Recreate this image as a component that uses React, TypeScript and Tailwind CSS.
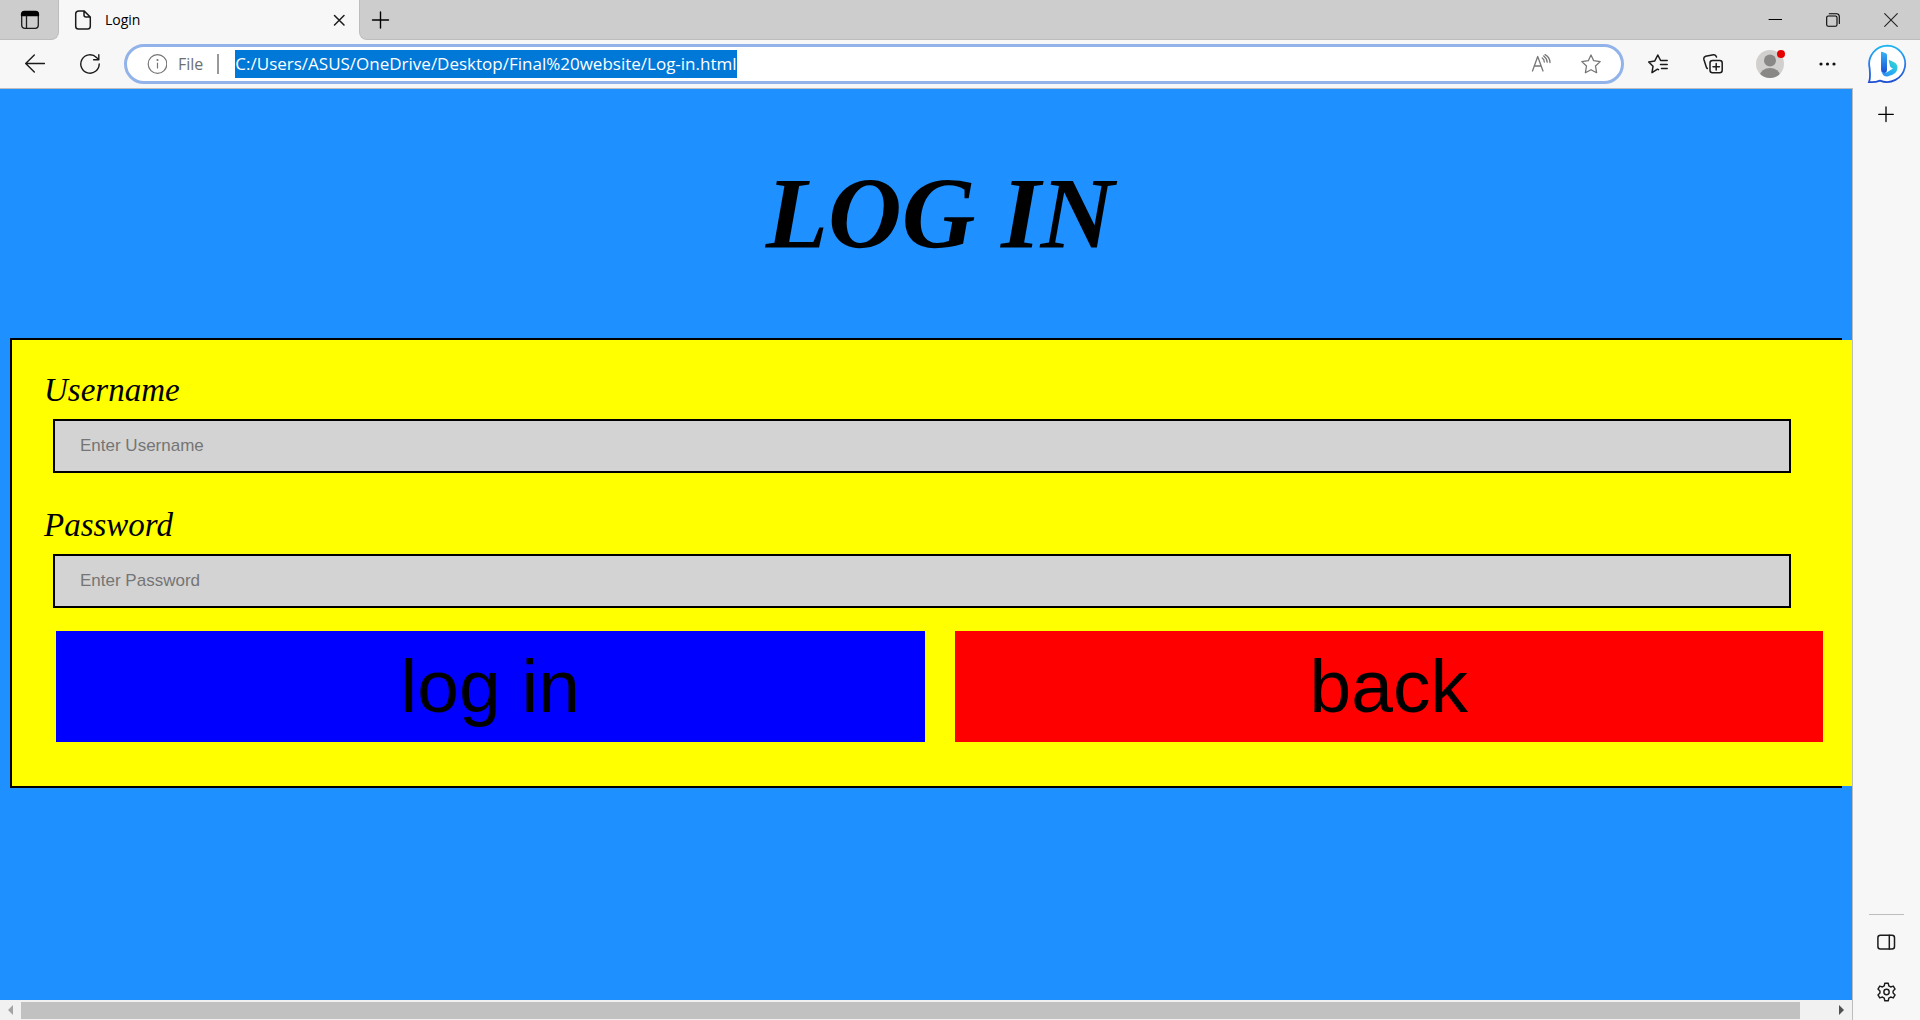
import type { ReactNode } from "react";

function Icon({ size = 20, stroke = "#1b1b1b", width = 1.3, children }: { size?: number; stroke?: string; width?: number; children: ReactNode }) {
  return (
    <svg width={size} height={size} viewBox={`0 0 ${size} ${size}`} fill="none" stroke={stroke} strokeWidth={width} strokeLinecap="round" strokeLinejoin="round" aria-hidden="true">
      {children}
    </svg>
  );
}

function BingLogo() {
  return (
    <svg width="40" height="40" viewBox="0 0 40 40" aria-hidden="true">
      <defs>
        <linearGradient id="ring" x1="0" y1="0" x2="0" y2="1">
          <stop offset="0" stopColor="#1fb6f0" />
          <stop offset="0.5" stopColor="#2b7de9" />
          <stop offset="1" stopColor="#1e4fd0" />
        </linearGradient>
        <linearGradient id="stem" x1="0" y1="0" x2="0" y2="1">
          <stop offset="0" stopColor="#36b4f5" />
          <stop offset="1" stopColor="#1a4fd6" />
        </linearGradient>
        <linearGradient id="bowl" x1="1" y1="0" x2="0" y2="1">
          <stop offset="0" stopColor="#2fe0c4" />
          <stop offset="0.5" stopColor="#28b3f2" />
          <stop offset="1" stopColor="#2a86ee" />
        </linearGradient>
      </defs>
      <path d="M20.500 1.600A18.200 18.200 0 1 1 13 36.600C9.500 38 5.500 38.400 2 38.100C3.200 35.500 3.400 32 2.600 24A18.400 18.400 0 0 1 20.500 1.600Z" fill="#fff" stroke="url(#ring)" strokeWidth="1.8" />
      <path d="M15 7.700L18.800 9.200Q20 9.800 20 11V25.500Q20 29 17.300 29Q14 29 14 25V8.500Q14 7.400 15 7.700Z" fill="url(#stem)" />
      <path d="M22.300 16L27.500 18.500Q30.700 20.500 30.500 24Q30 28.500 26 30.500L20.500 32.500Q15.500 32.700 14.300 27Q16.500 30 20 28.200L26 24.500L24.400 23.700Q23.400 23.200 23 22L21.800 17Q21.600 15.700 22.300 16Z" fill="url(#bowl)" />
    </svg>
  );
}

function TabStrip() {
  return (
    <header className="flex h-10 shrink-0 bg-[#f7f7f7]">
      <div className="flex w-[59px] rounded-br-lg border-r border-b border-[#bdbdbd] bg-[#cdcdcd]">
        <button aria-label="Tab actions" className="flex w-full items-center justify-center pl-0.5">
          <Icon>
            <rect x="1.700" y="1.700" width="16.600" height="16.600" rx="3" />
            <path d="M1.500 5.500V4.500Q1.500 1.500 4.500 1.500H15.500Q18.500 1.500 18.500 4.500V5.500Z" fill="#000" stroke="#000" />
            <path d="M6.500 6V18" />
          </Icon>
        </button>
      </div>
      <div className="flex w-[300px] items-center rounded-t-lg bg-[#f7f7f7] pr-[13px] pl-[14px]">
        <Icon width={1.5}>
          <path d="M6 0.900H11L17.300 7V16.300Q17.300 19.100 14.500 19.100H5.500Q2.700 19.100 2.700 16.300V3.700Q2.700 0.900 6 0.900ZM11 0.900V5Q11 7 13 7H17.300" />
        </Icon>
        <span className="ml-3 flex-1 pb-0.5 text-[14px]">Login</span>
        <button aria-label="Close tab" className="flex size-[14px] items-center justify-center">
          <Icon size={14} width={1.5}><path d="M2.500 2.500L12 12M12 2.500L2.500 12" /></Icon>
        </button>
      </div>
      <div className="flex flex-1 items-center rounded-bl-lg border-b border-l border-[#bdbdbd] bg-[#cdcdcd]">
        <button aria-label="New tab" className="flex h-full w-10 items-center justify-center">
          <Icon width={1.4} stroke="#000"><path d="M10.500 2V18M2.500 10H18.500" /></Icon>
        </button>
        <div className="flex-1" />
        <button aria-label="Minimize" className="flex h-full w-[58px] items-center justify-center">
          <Icon size={14} stroke="#000" width={1}><path d="M1 6.500H14" /></Icon>
        </button>
        <button aria-label="Restore" className="flex h-full w-[58px] items-center justify-center">
          <Icon size={14} stroke="#000" width={1.1}>
            <rect x="0.700" y="3" width="10.300" height="10.300" rx="1.500" />
            <path d="M3.300 0.700H10.500Q13.300 0.700 13.300 3.500V10.500" />
          </Icon>
        </button>
        <button aria-label="Close window" className="flex h-full w-[58px] items-center justify-center">
          <Icon size={14} stroke="#222" width={1.1}><path d="M0.700 0.700L13.300 13.300M13.300 0.700L0.700 13.300" /></Icon>
        </button>
      </div>
    </header>
  );
}

function Toolbar() {
  return (
    <nav className="flex h-12 shrink-0 items-center bg-[#f7f7f7] pl-[7px]">
      <button aria-label="Back" className="flex h-10 w-[55px] items-center justify-center">
        <Icon width={1.4}><path d="M19.500 9.500H0.900M9.300 1L0.700 9.500L9.300 18" /></Icon>
      </button>
      <button aria-label="Refresh" className="flex h-10 w-[55px] items-center justify-center">
        <Icon width={1.4}><path d="M19.200 10A9.200 9.200 0 1 1 16.500 3.500L18.800 5.700M18.800 0.700V5.700H13.600" /></Icon>
      </button>
      <div className="mr-[6px] ml-[7px] flex h-10 flex-1 items-center rounded-full border-[3px] border-[#92b3e9] bg-white pr-[5px] pl-[20px]">
        <Icon stroke="#767676" width={1.2}>
          <circle cx="10.500" cy="10" r="9.300" />
          <path d="M10.500 9V14" />
          <circle cx="10.500" cy="6" r="0.500" fill="#767676" />
        </Icon>
        <label htmlFor="address" className="ml-[11px] text-[16px] text-[#6e6e6e]">File</label>
        <span className="mr-4 ml-[14px] h-5 w-[2px] bg-[#999]" />
        <input id="address" readOnly defaultValue="C:/Users/ASUS/OneDrive/Desktop/Final%20website/Log-in.html" className="field-sizing-content h-7 bg-[#0078d7] pb-0.5 text-[17px] text-white outline-none" />
        <div className="flex-1" />
        <button aria-label="Read aloud" className="flex w-[50px] justify-center">
          <Icon stroke="#767676" width={1.3}>
            <path d="M1.500 17L6.700 2.500L12 17M3.300 12H10.200M11.300 4Q13.300 5.500 13.300 8M12.700 2Q16 4.500 16.200 8.200M14 0.700Q18.700 3 19 8.500" />
          </Icon>
        </button>
        <button aria-label="Add to favorites" className="flex w-[50px] justify-center">
          <Icon stroke="#767676">
            <path d="M10 1L12.700 6.700L19.200 7.600L14.500 12L15.600 18.700L10 15.700L4.400 18.700L5.500 12L0.800 7.600L7.300 6.700Z" />
          </Icon>
        </button>
      </div>
      <button aria-label="Favorites" className="flex w-14 justify-center">
        <Icon width={1.5}>
          <path d="M10.500 15.700L9.500 15.200L4 18.700L5 12.300L0.700 8L6.800 6.900L9.800 1L12.600 6.500M13.500 6.500H19.200M12.500 10.500H19.200M13.500 14.500H19.200" />
        </Icon>
      </button>
      <button aria-label="Collections" className="flex w-14 justify-center pr-0.5">
        <Icon width={1.5}>
          <rect x="7" y="6.500" width="12.200" height="12.300" rx="2.500" />
          <path d="M13.200 9.500V16M10 12.700H16.400M4.300 14.500Q3.500 14 3.200 12.800L0.900 5.500Q0.300 3 2.600 2.200L10.500 0.800Q12.800 0.500 13.500 3" />
        </Icon>
      </button>
      <button aria-label="Profile" className="flex w-14 justify-center">
        <svg width="32" height="32" viewBox="0 0 32 32" aria-hidden="true">
          <clipPath id="face"><circle cx="16" cy="16" r="14" /></clipPath>
          <circle cx="16" cy="16" r="14" fill="#d2d0ce" />
          <g clipPath="url(#face)" fill="#8a8886">
            <circle cx="16" cy="12.500" r="6" />
            <ellipse cx="16" cy="27.500" rx="10" ry="7.500" />
          </g>
          <circle cx="27" cy="6" r="4" fill="#e60000" />
        </svg>
      </button>
      <button aria-label="Settings and more" className="flex w-14 justify-center">
        <Icon stroke="none">
          <g fill="#111"><circle cx="5" cy="10" r="1.600" /><circle cx="11.500" cy="10" r="1.600" /><circle cx="18" cy="10" r="1.600" /></g>
        </Icon>
      </button>
      <button aria-label="Discover" className="flex w-[66px] justify-center"><BingLogo /></button>
    </nav>
  );
}

function Sidebar() {
  return (
    <aside className="flex w-[68px] shrink-0 flex-col items-center border-l border-[#bdbdbd] bg-[#f7f7f7] pt-4 pb-[18px]">
      <button aria-label="Add to sidebar">
        <Icon stroke="#000" width={1.3}><path d="M9 3V17.500M1.700 10.300H16.300" /></Icon>
      </button>
      <div className="flex-1" />
      <div className="h-px w-[35px] bg-[#bdbdbd]" />
      <button aria-label="Hide sidebar" className="mt-[17px]">
        <Icon width={1.5}><rect x="0.900" y="3.300" width="16.600" height="13.700" rx="2.500" /><path d="M12.300 3.300V17" /></Icon>
      </button>
      <button aria-label="Sidebar settings" className="mt-[30px]">
        <svg width="20" height="20" viewBox="0.5 -0.5 20 21" fill="none" stroke="#1b1b1b" strokeWidth="1.5" strokeLinejoin="round" aria-hidden="true">
          <path d="M8.200 0.800H11.800L12.400 3.600L14.300 4.700L17.100 3.800L19 6.900L16.900 8.900V11.100L19 13.100L17.100 16.200L14.300 15.300L12.400 16.400L11.800 19.200H8.200L7.600 16.400L5.700 15.300L2.900 16.200L1 13.100L3.100 11.100V8.900L1 6.900L2.900 3.800L5.700 4.700L7.600 3.600Z" />
          <circle cx="10" cy="10" r="2.800" />
        </svg>
      </button>
    </aside>
  );
}

function Field({ id, label, type }: { id: string; label: string; type: string }) {
  return (
    <div className="flex flex-col gap-[10px]">
      <label htmlFor={id} className="ml-8 self-start font-['Liberation_Serif',serif] text-[33px] leading-[38px] italic">{label}</label>
      <input
        id={id}
        type={type}
        placeholder={`Enter ${label}`}
        className="mr-[61px] ml-[41px] h-[54px] border-2 border-black bg-[#d3d3d3] px-[25px] text-[17px] outline-none placeholder:text-[#757575]"
      />
    </div>
  );
}

function LoginPage() {
  return (
    <main className="flex-1 overflow-hidden bg-[#1e90ff] pt-[67px] font-['Liberation_Sans',sans-serif]">
      <h1 className="mb-[67px] pl-7 text-center font-['Liberation_Serif',serif] text-[102px] leading-[115px] font-bold italic">LOG IN</h1>
      <div className="mx-[10px] border-2 border-black">
        <form className="-mr-3 flex flex-col bg-[#ffff00] pt-[31px] pb-11">
          <div className="flex flex-col gap-[33px]">
            <Field id="username" label="Username" type="text" />
            <Field id="password" label="Password" type="password" />
          </div>
          <div className="mt-[23px] mr-[29px] ml-11 flex gap-[30px] text-[75px] leading-[111px]">
            <button type="button" className="flex-1 bg-[#0000ff]">log in</button>
            <button type="button" className="flex-1 bg-[#ff0000]">back</button>
          </div>
        </form>
      </div>
    </main>
  );
}

function ScrollBar() {
  return (
    <div className="flex h-5 shrink-0 items-center bg-[#f1f1f1]">
      <button aria-label="Scroll left" className="flex w-[21px] justify-center">
        <svg width="6" height="10" viewBox="0 0 6 10" aria-hidden="true"><path d="M5 0V10L0 5Z" fill="#a3a3a3" /></svg>
      </button>
      <div className="h-[17px] flex-1 bg-[#c1c1c1]" />
      <div className="w-[31px]" />
      <button aria-label="Scroll right" className="flex w-[21px] justify-center">
        <svg width="6" height="10" viewBox="0 0 6 10" aria-hidden="true"><path d="M0 0V10L5 5Z" fill="#505050" /></svg>
      </button>
    </div>
  );
}

export default function App() {
  return (
    <div className="flex h-screen flex-col bg-[#f7f7f7] font-['Open_Sans','Noto_Sans',sans-serif] text-black">
      <TabStrip />
      <Toolbar />
      <div className="flex min-h-0 flex-1">
        <div className="flex min-w-0 flex-1 flex-col border-t border-[#bdbdbd]">
          <LoginPage />
          <ScrollBar />
        </div>
        <Sidebar />
      </div>
    </div>
  );
}
